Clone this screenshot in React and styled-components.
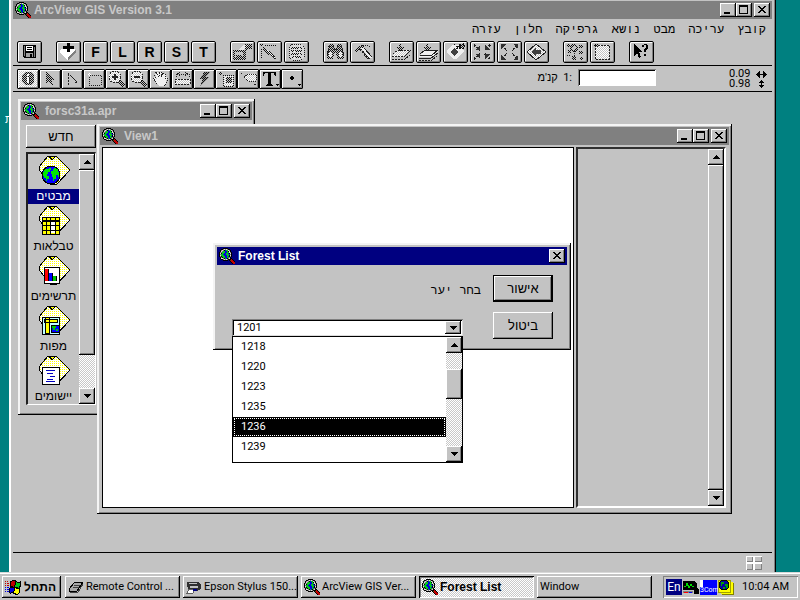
import React, { useState } from 'react';
import styled, { createGlobalStyle, css } from 'styled-components';

const GREY = '#c3c3c3';
const NAVY = '#000080';

const raised = css`
  box-shadow: inset -1px -1px #000, inset 1px 1px #fff, inset -2px -2px #808080;
`;

const checker = css`
  background: repeating-conic-gradient(#fff 0 25%, #c8c8c8 0 50%) 0 0 / 2px 2px;
`;

const GlobalStyle = createGlobalStyle`
  * { box-sizing: border-box; }
  body {
    margin: 0;
    background: #008080;
    font: 11px/14px Roboto, "Liberation Sans", Arial, sans-serif;
    color: #000;
  }
  button, input, select {
    font: inherit;
    color: inherit;
    margin: 0;
    padding: 0;
    border: 0;
    border-radius: 0;
    outline: 0;
  }
  svg { display: block; flex: none; }
`;

const Desktop = styled.div`
  position: relative;
  display: flex;
  flex-direction: column;
  height: 100vh;
  overflow: hidden;
`;

const ShortcutLabel = styled.span`
  position: absolute;
  left: 5px;
  top: 113px;
  color: #fff;
`;

const MainWindow = styled.main`
  position: relative;
  flex: 1;
  min-height: 0;
  display: flex;
  flex-direction: column;
  margin: 0 24px 0 9px;
  padding: 1px 4px 0;
  background: ${GREY};
  box-shadow: inset -1px 0 #000, inset 2px 0 #fff, inset -2px 0 #808080;
`;

const TitleBar = styled.header`
  display: flex;
  align-items: center;
  flex: none;
  gap: 3px;
  height: 18px;
  padding: 0 2px;
  background: ${p => (p.$active ? NAVY : '#808080')};
  color: ${p => (p.$active ? '#fff' : '#c8c8c8')};
`;

const Title = styled.h1`
  flex: 1;
  margin: 0;
  padding-left: ${p => p.$indent || 0}px;
  font: bold 12px/18px "Liberation Sans", Arial, sans-serif;
`;

const CaptionGroup = styled.div`
  display: flex;
`;

const CaptionButton = styled.button`
  width: 16px;
  height: 14px;
  padding: 0 0 0 1px;
  background: ${GREY};
  color: #000;
  ${raised}
  &:last-child { margin-left: 2px; }
`;

const Menu = styled.nav`
  display: flex;
  direction: rtl;
  align-items: center;
  gap: 13px;
  height: 22px;
  padding: 0 6px;
  font-family: "Liberation Mono", monospace;
  font-size: 12px;
`;

const MenuItem = styled.button`
  background: none;
`;

const ButtonBar = styled.div`
  display: flex;
  gap: 14px;
  padding: 0 4px 2px;
  border-bottom: 1px solid #000;
`;

const ButtonGroup = styled.div`
  display: flex;
  gap: 2px;
`;

const BarButton = styled.button`
  width: 25px;
  height: 22px;
  border: 1px solid #000;
  border-radius: 2px;
  background: ${GREY};
  box-shadow: inset 1px 1px #fff, inset -1px -1px #808080;
  font: bold 14px/18px "Liberation Sans", Arial, sans-serif;
`;

const ToolBar = styled.div`
  display: flex;
  align-items: flex-start;
  padding: 3px 4px 2px;
  border-bottom: 1px solid #000;
`;

const ToolButton = styled.button`
  width: 22px;
  height: 20px;
  border: 1px solid #000;
  border-radius: 1px;
  background: ${GREY};
  box-shadow: inset 1px 1px #fff, inset -1px -1px #808080;
  ${p => p.$pressed && checker}
`;

const ScaleField = styled.label`
  display: flex;
  align-items: center;
  gap: 6px;
  margin-left: auto;
`;

const ScaleInput = styled.input`
  width: 78px;
  height: 17px;
  padding: 0 3px;
  background: #fff;
  box-shadow: inset 1px 1px #808080, inset -1px -1px #fff, inset 2px 2px #000;
`;

const Readout = styled.output`
  display: flex;
  gap: 5px;
  margin-left: 73px;
`;

const ReadoutValues = styled.span`
  width: 22px;
  line-height: 10px;
`;

const Workspace = styled.div`
  position: relative;
  flex: 1;
  min-height: 0;
`;

const StatusBar = styled.footer`
  display: flex;
  justify-content: flex-end;
  flex: none;
  height: 20px;
  padding: 3px 10px 0;
  border-top: 1px solid #000;
`;

const Frame = styled.section`
  position: absolute;
  display: flex;
  flex-direction: column;
  padding: 3px;
  background: ${GREY};
  box-shadow: inset -1px -1px #000, inset 2px 2px #f4f4f4, inset -2px -2px #808080;
`;

const ProjectFrame = styled(Frame)`
  left: 5px;
  top: 7px;
  width: 237px;
  height: 316px;
`;

const ViewFrame = styled(Frame)`
  left: 84px;
  top: 32px;
  right: 40px;
  bottom: 38px;
`;

const DialogFrame = styled(Frame)`
  left: 213px;
  top: 243px;
  width: 358px;
  padding: 4px;
`;

const ProjectBody = styled.div`
  display: flex;
  flex-direction: column;
  gap: 4px;
  width: 75px;
  padding: 5px 0 0 5px;
`;

const PushButton = styled.button`
  width: 100%;
  height: ${p => p.$height}px;
  background: ${GREY};
  font-size: 13px;
  ${raised}
  ${p => p.$default && css`
    border: 1px solid #000;
  `}
`;

const DocPane = styled.div`
  display: flex;
  border: solid;
  border-width: 2px 1px 1px 2px;
  border-color: #202020 #fff #fff #202020;
`;

const DocList = styled.ul`
  flex: 1;
  min-width: 0;
  margin: 0;
  padding: 0;
  list-style: none;
`;

const DocItem = styled.li`
  display: flex;
  flex-direction: column;
  align-items: center;
  gap: 4px;
  padding-top: 1px;
`;

const DocLabel = styled.button`
  width: 100%;
  height: 15px;
  white-space: nowrap;
  font-size: 12px;
  line-height: 15px;
  background: ${p => (p.$selected ? NAVY : 'none')};
  color: ${p => (p.$selected ? '#fff' : '#000')};
`;

const ScrollTrack = styled.div`
  display: flex;
  flex-direction: column;
  flex: none;
  width: 16px;
  ${checker}
`;

const ScrollArrow = styled.button`
  display: flex;
  align-items: center;
  justify-content: center;
  flex: none;
  height: 16px;
  background: ${GREY};
  ${raised}
`;

const ScrollSpace = styled.div`
  flex: ${p => p.$grow} 0 0;
`;

const ScrollThumb = styled(ScrollSpace)`
  background: ${GREY};
  ${raised}
`;

const ViewBody = styled.div`
  display: flex;
  flex: 1;
  gap: 2px;
  padding: 2px 3px 3px 2px;
`;

const MapCanvas = styled.div`
  flex: 1;
  background: #fff;
  border: 1px solid #000;
`;

const Legend = styled.div`
  display: flex;
  justify-content: flex-end;
  width: 150px;
  border: 2px solid;
  border-color: #303030 #fff #fff #303030;
`;

const DialogBody = styled.form`
  display: flex;
  gap: 12px;
  padding: 10px 14px 7px 15px;
`;

const DialogFields = styled.div`
  display: flex;
  flex-direction: column;
  flex: 1;
  gap: 20px;
  padding-top: 8px;
`;

const FieldLabel = styled.label`
  align-self: flex-end;
  font: 12px/16px "Liberation Mono", monospace;
`;

const DialogButtons = styled.div`
  display: flex;
  flex-direction: column;
  gap: 10px;
  width: 60px;
`;

const Combo = styled.div`
  position: relative;
  display: flex;
  width: 231px;
  height: 17px;
  padding: 2px;
  background: #fff;
  box-shadow: inset 1px 1px #808080, inset -1px -1px #dcdcdc, inset 2px 2px #000;
`;

const ComboSelect = styled.select`
  flex: 1;
  appearance: none;
  padding-left: 3px;
  background: #fff;
  line-height: 13px;
`;

const ComboArrow = styled(ScrollArrow)`
  width: 16px;
  height: 13px;
`;

const DropDown = styled.div`
  position: absolute;
  left: 0;
  top: 17px;
  width: 231px;
  height: 127px;
  display: flex;
  border: 1px solid #000;
  background: #fff;
`;

const Options = styled.ul`
  flex: 1;
  margin: 0;
  padding: 0;
  list-style: none;
`;

const Option = styled.li`
  height: 20px;
  padding-left: 8px;
  line-height: 20px;
  ${p => p.$selected && css`
    background: #000;
    color: #fff;
    outline: 1px dotted #fff;
    outline-offset: -2px;
  `}
`;

const Taskbar = styled.footer`
  display: flex;
  flex: none;
  gap: 3px;
  height: 28px;
  padding: 4px 2px 2px;
  background: ${GREY};
  box-shadow: inset 0 1px #d8d8d8, inset 0 2px #fff;
`;

const TaskButton = styled.button`
  display: flex;
  align-items: center;
  gap: 2px;
  flex: 0 1 115px;
  min-width: 0;
  padding: 0 3px;
  background: ${GREY};
  white-space: nowrap;
  ${raised}
  ${p => p.$pressed && css`
    ${checker}
    font: bold 12px/14px "Liberation Sans", Arial, sans-serif;
    box-shadow: inset 1px 1px #000, inset -1px -1px #fff, inset 2px 2px #808080;
  `}
`;

const StartButton = styled(TaskButton)`
  flex: 0 0 59px;
  gap: 3px;
  margin-right: 1px;
  font-size: 12px;
  font-weight: bold;
`;

const Tray = styled.div`
  display: flex;
  align-items: center;
  gap: 1px;
  width: 135px;
  margin-left: auto;
  padding: 0 3px;
  white-space: nowrap;
  box-shadow: inset 1px 1px #808080, inset -1px -1px #fff;
`;

const Language = styled.span`
  width: 16px;
  height: 16px;
  background: ${NAVY};
  color: #fff;
  font-size: 12px;
  line-height: 16px;
  text-align: center;
`;

const Modem = styled.span`
  width: 17px;
  height: 15px;
  padding-top: 6px;
  background: linear-gradient(#fff, #fff) 0 0 / 3px 7px no-repeat #00f;
  color: #fff;
  font-size: 7px;
  line-height: 9px;
  text-align: center;
`;

const Clock = styled.time`
  margin-left: auto;
  padding-right: 6px;
`;

/* ---------- drawings ---------- */

const PALETTE = {
  k: '#000', g: '#808080', w: '#e0e0e0', b: '#0000e0', G: '#00c818',
  r: '#c00000', y: '#604000', Y: '#ffff00',
};

function Pixels({ rows }) {
  return (
    <svg width={rows[0].length} height={rows.length} shapeRendering="crispEdges" aria-hidden="true">
      {rows.flatMap((row, y) =>
        [...row].map((c, x) =>
          PALETTE[c] ? <rect key={`${x}-${y}`} x={x} y={y} width="1" height="1" fill={PALETTE[c]} /> : null
        )
      )}
    </svg>
  );
}

const GLASS = [
  '....kkkkk.......',
  '..kkgwgwgkk.....',
  '.kgwgkbGGwgk....',
  '.kwgGGbbGkwk....',
  'kggGGGbbGGwgk...',
  'kwkGGbbGGbkwk...',
  'kgGGbbbGGGbgk...',
  'kwGGGbbbGGkwk...',
  'kgkGGGbbGbkgk...',
  '.kgkGGbbGGgk....',
  '.kwwgkGbkgwkk...',
  '..kkgwgwgkkkrk..',
  '....kkkkk.kyrrk.',
  '...........krrrk',
  '............krrr',
  '.............krr',
];

const FLAG = [
  '.......kkkk.....',
  'r.r..kkrrrkk...k',
  '.....krrrrkGkkkk',
  'r.rr.krrrrkGGGGk',
  '.....krrrrkGGGGk',
  'r.rr.krrrkGGGGGk',
  '.....kkkrkGGGGkk',
  'b.bb.kkkkkkkkGk.',
  '....kbbbbkYkkkk.',
  'b.bbkbbbbkYYYYk.',
  '....kbbbbkYYYYk.',
  'b.bbkbbbkYYYYYk.',
  '....kbkkkYYYYYk.',
  '.....k..kkkYYk..',
  '..........kkk...',
];

function Patterns() {
  return (
    <svg width="0" height="0" aria-hidden="true">
      <defs>
        <pattern id="dim" width="2" height="2" patternUnits="userSpaceOnUse">
          <path d="M0 0h1v1h-1zM1 1h1v1h-1z" fill="#101010" />
        </pattern>
        <pattern id="pale" width="2" height="2" patternUnits="userSpaceOnUse">
          <path d="M0 0h1v1h-1zM1 1h1v1h-1z" fill="#fff" />
        </pattern>
        <pattern id="cloth" width="2" height="2" patternUnits="userSpaceOnUse">
          <path d="M0 0h2v2h-2z" fill="#fff" />
          <path d="M0 0h1v1h-1z" fill="#ffff00" />
        </pattern>
      </defs>
    </svg>
  );
}

function Icon({ w = 23, h = 20, children }) {
  return (
    <svg width={w} height={h} fill="none" stroke="none" shapeRendering="crispEdges" aria-hidden="true">
      {children}
    </svg>
  );
}

const dim = 'url(#dim)';
const pale = 'url(#pale)';

const barIcons = {
  save: (
    <>
      <path d="M5 3h13v13h-12l-1-1z" fill="#000" />
      <path d="M6 4h1v10h-1zM16 5h1v10h-1z" fill="#808080" />
      <path d="M8 4h7v5h-7z" fill="#fff" />
      <path d="M9 5h5v1h-5zM9 7h5v1h-5z" fill="#000" />
      <path d="M8 11h7v4h-7z" fill="#a0a0a0" />
      <path d="M12 12h2v3h-2z" fill="#000" />
    </>
  ),
  addTheme: (
    <>
      <path d="M3 8l4-2h8l4 2v3l-8 7-8-7z" fill="#fff" />
      <path d="M19 8v3l-8 7v-3z" fill="#808080" />
      <path d="M10 1h3v3h4v3h-4v3h-3v-3h-4v-3h4z" fill="#000" />
    </>
  ),
  properties: (
    <>
      <path d="M2 8h13v10h-13z" fill={dim} />
      <path d="M4 10h8v5h-8z" fill={GREY} />
      <path d="M5 13h6v3h-6z" fill={dim} />
      <path d="M7 8l5-5h5l-4 5z" fill="#e8e8e8" />
      <path d="M14 2h7v5h-4l-3 2z" fill={dim} />
    </>
  ),
  editLegend: (
    <>
      <path d="M2 2h3v2h-3zM6 3h13v1h-13zM3 6h1v10h-1z" fill={dim} />
      <path d="M5 6l12 10" stroke={dim} strokeWidth="3" />
      <path d="M9 8l8 8" stroke="#fff" />
      <path d="M12 12l6 5" stroke="#303030" strokeDasharray="2 1" />
    </>
  ),
  table: (
    <>
      <path d="M7 2h9l3 3v10l-3 3h-9l-3-3v-10z" fill="#d8d8d8" />
      <path d="M7 2h9l3 3v10l-3 3h-9l-3-3v-10z" stroke="#202020" strokeDasharray="1 1" />
      <path d="M6 5h11v2h-11zM6 8h11v2h-11zM6 11h11v2h-11zM7 14h9v2h-9z" fill={dim} />
      <path d="M9 3v14M14 3v14" stroke="#e8e8e8" strokeDasharray="2 1" />
    </>
  ),
  find: (
    <>
      <path d="M5 2h4l2 5h1l2-5h4l2 10v5h-6l-2-6h-1l-2 6h-6v-5z" fill={dim} />
      <path d="M5 10h3v5h-3zM15 10h3v5h-3z" fill={pale} />
      <path d="M6 3l-3 10M17 3l3 10M9 4l2 6M14 4l-2 6" stroke="#303030" strokeDasharray="2 1" />
    </>
  ),
  query: (
    <>
      <path d="M3 8l5-4 3-1 2 2-7 5z" fill={dim} />
      <path d="M10 3h6l4 2" stroke="#202020" strokeDasharray="1 1" />
      <path d="M9 7l9 10" stroke="#202020" strokeWidth="2" strokeDasharray="2 1" />
      <path d="M11 6l9 10" stroke="#f0f0f0" strokeWidth="2" />
      <path d="M13 6l8 9" stroke="#202020" />
    </>
  ),
  zoomAll: (
    <>
      <path d="M7 8h14l-6 7h-13z" fill={pale} />
      <path d="M3 12l5-4h13l-6 6h-13M2 17h13l6-5" stroke="#202020" strokeDasharray="2 1" />
      <path d="M9 2h2v3h3l-4 4-4-4h3z" fill={dim} />
    </>
  ),
  zoomActive: (
    <>
      <path d="M7 9h14l-6 6h-13z" fill="#f0f0f0" />
      <path d="M3 12l5-4h13l-6 5h-12M2 16h12l7-5" stroke="#202020" />
      <path d="M2 18h13l6-5" stroke="#202020" strokeDasharray="2 1" />
      <path d="M9 2h2v3h3l-4 4-4-4h3z" fill={dim} />
    </>
  ),
  zoomSelected: (
    <>
      <path d="M3 8l5-5h8l4 6-8 8h-3l-6-6z" fill="#eee" />
      <path d="M10 6l4 4-4 4-4-4z" fill="#404040" />
      <path d="M10 2l5 4M16 2v4h-4M15 6l5-5M15 2h5v4h-5z" fill={dim} stroke="#101010" strokeDasharray="2 1" />
    </>
  ),
  zoomIn: (
    <>
      <path d="M3 3l6 5M19 3l-5 5M3 17l6-5M19 17l-5-5" stroke="#202020" strokeWidth="2" strokeDasharray="2 1" />
      <path d="M9 3v5h-5zM14 3v5h5zM9 17v-5h-5zM14 17v-5h5z" fill="#303030" />
    </>
  ),
  zoomOut: (
    <>
      <path d="M4 4l5 4M19 4l-5 4M4 16l5-4M19 16l-5-4" stroke="#202020" strokeWidth="2" strokeDasharray="2 1" />
      <path d="M3 2h5l-5 5zM20 2h-5l5 5zM3 18h5l-5-5zM20 18h-5l5-5z" fill="#303030" />
    </>
  ),
  zoomPrevious: (
    <>
      <path d="M2 10l9-8 10 8-10 8z" fill={pale} stroke="#202020" />
      <path d="M6 10l5-4v2h5v4h-5v2z" fill="#404040" />
    </>
  ),
  selectFeatures: (
    <>
      <path d="M3 2h3v3h-3zM15 3h4v3h-4zM4 8h3v3h-3zM15 9h4v3h-4zM8 14h4v4h-4zM16 15h3v3h-3z" fill={dim} />
      <circle cx="10" cy="6" r="3" stroke={dim} strokeWidth="2" />
      <path d="M10 9v6M3 13h4" stroke="#202020" strokeDasharray="1 1" />
    </>
  ),
  clearSelected: (
    <>
      <path d="M4 3h14v14h-14z" fill={pale} stroke="#202020" strokeDasharray="2 1" />
      <path d="M3 2h4v3h-4z" fill={dim} />
    </>
  ),
  help: (
    <>
      <path d="M4 2v12l3-3 2 5 2-1-2-5h4z" fill="#000" />
      <path d="M12 3h2v-1h3v1h1v4h-1v1h-1v2h-2v-3h1v-1h1v-3h-2v2h-2zM14 12h2v2h-2z" fill="#000" />
    </>
  ),
};

const toolIcons = {
  identify: (
    <>
      <path d="M7 2h6l3 3v7l-3 3h-6l-3-3v-7z" fill={GREY} />
      <path d="M7 2h6l3 3v7l-3 3h-6l-3-3v-7z" fill={dim} />
      <path d="M9 4h2v2h-2zM9 7h2v6h-2z" fill="#fff" />
      <path d="M11 7h1v6h-1z" fill="#303030" />
    </>
  ),
  pointer: <path d="M6 2v11l3-2 3 5 2-1-3-5h4z" fill={dim} />,
  vertex: <path d="M6 15v-12l9 9M13 12h3" stroke="#202020" strokeDasharray="2 1" />,
  select: (
    <>
      <path d="M6 5h11v10h-12v-10" stroke="#202020" strokeDasharray="1 1" />
      <path d="M3 4h5v1h-5zM5 2h1v5h-1z" fill={pale} />
    </>
  ),
  zoomIn: (
    <>
      <circle cx="9" cy="7" r="6" fill={pale} stroke="#202020" strokeDasharray="2 1" />
      <path d="M8 4h2v2h2v2h-2v2h-2v-2h-2v-2h2z" fill="#202020" />
      <path d="M13 11l5 5" stroke={dim} strokeWidth="3" />
    </>
  ),
  zoomOut: (
    <>
      <circle cx="9" cy="7" r="6" fill={pale} stroke="#202020" strokeDasharray="2 1" />
      <path d="M6 6h6v2h-6z" fill="#202020" />
      <path d="M13 11l5 5" stroke={dim} strokeWidth="3" />
    </>
  ),
  pan: (
    <>
      <path d="M5 4l2-2 2 1 2-1 2 1 2 1 2 4-1 5-3 3h-4l-6-7 1-2 3 2z" fill="#f0f0f0" />
      <path d="M6 8l-2-4 2-2 3 5v-5h2v5l2-4 2 1v4l2 0v4l-3 4M3 8l6 8" stroke="#202020" strokeDasharray="1 1" />
    </>
  ),
  measure: (
    <>
      <path d="M3 9h15v5h-15z" fill={pale} stroke="#202020" strokeDasharray="2 1" />
      <path d="M4 7v-3h13v3M8 2l-3 2 3 2M13 2l3 2-3 2" stroke="#202020" strokeDasharray="1 1" />
    </>
  ),
  hotLink: (
    <>
      <path d="M10 2h6l-4 5h3l-9 9 3-7h-3z" fill="#909090" />
      <path d="M10 2h6l-4 5h3l-9 9 3-7h-3z" fill={dim} />
    </>
  ),
  areaOfInterest: (
    <>
      <path d="M7 5h10v11h-10z" fill={pale} stroke={dim} />
      <path d="M10 7h6v6h-6z" fill={dim} />
      <path d="M3 3h4v1h-4zM4 2h1v4h-1z" fill={dim} />
    </>
  ),
  label: (
    <>
      <path d="M6 7l4-3h8v7h-8z" fill={pale} stroke="#202020" strokeDasharray="1 1" />
      <path d="M3 3h1v1h-1zM16 14h2v1h-2z" fill="#202020" />
    </>
  ),
  text: (
    <>
      <path d="M3 2h13v4h-1l-1-3h-3v11l2 1v1h-7v-1l2-1v-11h-3l-1 3h-1z" fill="#000" />
      <path d="M16 14h3v1h-1v1h-1v-1h-1z" fill="#000" />
    </>
  ),
  point: (
    <>
      <path d="M9 6h2v1h1v2h-1v1h-2v-1h-1v-2h1z" fill="#000" />
      <path d="M16 14h3v1h-1v1h-1v-1h-1z" fill="#000" />
    </>
  ),
};

const shirt = (
  <>
    <path d="M10 1h8l13 13v2l-12 13h-7l-9-12-2-2v-3z" fill="url(#cloth)" stroke="#000" />
    <path d="M11 1l3 4 4-4z" fill="#ffff00" stroke="#000" strokeWidth="1" />
  </>
);

const docIcons = {
  views: (
    <>
      <circle cx="13" cy="20" r="9" fill="#0000ff" stroke="#000" />
      <path d="M7 14h4v-1h2v2h-1v2h-2v2h-1v2h2v3h-2v2h-1v-3h-2v-2h-1v-4h1v-2h1zM16 13h2v1h2v3h1v5h-1v-2h-2v4h-2v2h-1v-4h-1v-3h-1v-3h2v-2h1z" fill="#00e800" />
    </>
  ),
  tables: (
    <>
      <path d="M4 12h17v17h-17z" fill="#ffff00" stroke="#000" />
      <path d="M13 16h4v12h-4z" fill="#fff" />
      <path d="M4 16h17M4 20h17M4 25h17M8 12v17M12 12v17M17 12v17" stroke="#000" />
      <path d="M4 15h17v1h-17z" fill="#000" />
    </>
  ),
  charts: (
    <>
      <path d="M6 12h15v16h-15z" fill="#fff" stroke="#000" />
      <path d="M7 14h3v12h-3z" fill="#f00" />
      <path d="M11 18h3v8h-3z" fill="#00f" />
      <path d="M15 21h3v5h-3z" fill="#00c800" />
      <path d="M10 14h1v12h-1zM14 18h1v8h-1zM18 21h1v5h-1z" fill="#000" />
    </>
  ),
  layouts: (
    <>
      <path d="M4 12h17v17h-17z" fill="#c0ffff" stroke="#000" />
      <path d="M7 12h4v16h-4zM6 14h13v3h-13z" fill="#ffff00" stroke="#000" />
      <path d="M13 20h8v7h-8z" fill="#0000ff" stroke="#000" />
      <path d="M14 21h4l-1 4h-2zM18 24h2v2h-2z" fill="#00c800" />
    </>
  ),
  scripts: (
    <>
      <path d="M4 12h17v17h-17z" fill="#fff" stroke="#000" />
      <path d="M8 15h9M9 18h6M12 21h5M9 24h6M8 26h9" stroke="#0000c0" />
    </>
  ),
};

function Caption({ close }) {
  return (
    <CaptionGroup>
      {!close && (
        <CaptionButton aria-label="Minimize">
          <Icon w={15} h={14}><path d="M3 9h6v2h-6z" fill="#000" /></Icon>
        </CaptionButton>
      )}
      {!close && (
        <CaptionButton aria-label="Maximize">
          <Icon w={15} h={14}><path d="M2 2h9v9h-9zM3 4v6h7v-6z" fill="#000" fillRule="evenodd" /></Icon>
        </CaptionButton>
      )}
      <CaptionButton aria-label="Close">
        <Icon w={15} h={14}>
          <path d="M3 3h2v1h1v1h2v-1h1v-1h2v1h-1v1h-1v1h-1v1h1v1h1v1h1v1h-2v-1h-1v-1h-2v1h-1v1h-2v-1h1v-1h1v-1h1v-1h-1v-1h-1v-1h-1z" fill="#000" />
        </Icon>
      </CaptionButton>
    </CaptionGroup>
  );
}

function Arrow({ up }) {
  return (
    <Icon w={7} h={4}>
      <path d={up ? 'M3 0h1v1h1v1h1v1h1v1h-7v-1h1v-1h1v-1h1z' : 'M0 0h7v1h-1v1h-1v1h-1v1h-1v-1h-1v-1h-1v-1h-1z'} fill="#000" />
    </Icon>
  );
}

function ScrollBar({ before = 0, size, after = 0 }) {
  return (
    <ScrollTrack>
      <ScrollArrow type="button" aria-label="Scroll up"><Arrow up /></ScrollArrow>
      <ScrollSpace $grow={before} />
      <ScrollThumb $grow={size} />
      <ScrollSpace $grow={after} />
      <ScrollArrow type="button" aria-label="Scroll down"><Arrow /></ScrollArrow>
    </ScrollTrack>
  );
}

/* ---------- content ---------- */

const menus = ['קובץ', 'עריכה', 'מבט', 'נושא', 'גרפיקה', 'חלון', 'עזרה'];

const barGroups = [
  ['save'],
  ['addTheme', 'F', 'L', 'R', 'S', 'T'],
  ['properties', 'editLegend', 'table'],
  ['find', 'query'],
  ['zoomAll', 'zoomActive', 'zoomSelected', 'zoomIn', 'zoomOut', 'zoomPrevious'],
  ['selectFeatures', 'clearSelected'],
  ['help'],
];

const docs = [
  ['views', 'מבטים'],
  ['tables', 'טבלאות'],
  ['charts', 'תרשימים'],
  ['layouts', 'מפות'],
  ['scripts', 'יישומים'],
];

const forests = ['1218', '1220', '1223', '1235', '1236', '1239'];

function ForestDialog() {
  const [forest, setForest] = useState('1236');

  return (
    <DialogFrame role="dialog" aria-label="Forest List">
      <TitleBar $active>
        <Pixels rows={GLASS} />
        <Title as="h2">Forest List</Title>
        <Caption close />
      </TitleBar>
      <DialogBody onSubmit={e => e.preventDefault()}>
        <DialogFields>
          <FieldLabel htmlFor="forest" dir="rtl">בחר יער</FieldLabel>
          <Combo>
            <ComboSelect id="forest" defaultValue="1201">
              <option>1201</option>
            </ComboSelect>
            <ComboArrow type="button" aria-label="Open list"><Arrow /></ComboArrow>
            <DropDown>
              <Options role="listbox" aria-label="Forests">
                {forests.map(f => (
                  <Option
                    key={f}
                    role="option"
                    aria-selected={f === forest}
                    $selected={f === forest}
                    onClick={() => setForest(f)}
                  >
                    {f}
                  </Option>
                ))}
              </Options>
              <ScrollBar before={16} size={30} after={47} />
            </DropDown>
          </Combo>
        </DialogFields>
        <DialogButtons>
          <PushButton $height={27} $default>אישור</PushButton>
          <PushButton $height={27} type="button">ביטול</PushButton>
        </DialogButtons>
      </DialogBody>
    </DialogFrame>
  );
}

function ProjectWindow() {
  const [selected, setSelected] = useState('views');

  return (
    <ProjectFrame>
      <TitleBar>
        <Pixels rows={GLASS} />
        <Title as="h2" $indent={3}>forsc31a.apr</Title>
        <Caption />
      </TitleBar>
      <ProjectBody>
        <PushButton $height={23}>חדש</PushButton>
        <DocPane>
          <DocList>
            {docs.map(([id, name]) => (
              <DocItem key={id}>
                <Icon w={32} h={30}>
                  {shirt}
                  {docIcons[id]}
                </Icon>
                <DocLabel $selected={id === selected} onClick={() => setSelected(id)}>{name}</DocLabel>
              </DocItem>
            ))}
          </DocList>
          <ScrollBar size={185} after={33} />
        </DocPane>
      </ProjectBody>
    </ProjectFrame>
  );
}

function ViewWindow() {
  return (
    <ViewFrame>
      <TitleBar>
        <Pixels rows={GLASS} />
        <Title as="h2" $indent={3}>View1</Title>
        <Caption />
      </TitleBar>
      <ViewBody>
        <MapCanvas />
        <Legend>
          <ScrollBar size={1} />
        </Legend>
      </ViewBody>
    </ViewFrame>
  );
}

function App() {
  return (
    <Desktop>
      <GlobalStyle />
      <ShortcutLabel>ת</ShortcutLabel>
      <MainWindow>
        <TitleBar>
          <Pixels rows={GLASS} />
          <Title>ArcView GIS Version 3.1</Title>
          <Caption />
        </TitleBar>
        <Menu>
          {menus.map(m => <MenuItem key={m}>{m}</MenuItem>)}
        </Menu>
        <ButtonBar>
          {barGroups.map(group => (
            <ButtonGroup key={group[0]}>
              {group.map(b => (
                <BarButton key={b} aria-label={b}>
                  {barIcons[b] ? <Icon>{barIcons[b]}</Icon> : b}
                </BarButton>
              ))}
            </ButtonGroup>
          ))}
        </ButtonBar>
        <ToolBar>
          {Object.keys(toolIcons).map(t => (
            <ToolButton key={t} aria-label={t} $pressed={t === 'identify'}>
              <Icon w={20} h={18}>{toolIcons[t]}</Icon>
            </ToolButton>
          ))}
          <ScaleField>
            <span><bdi>קנ'מ</bdi>&nbsp; 1:</span>
            <ScaleInput type="text" />
          </ScaleField>
          <Readout>
            <ReadoutValues>0.09<br />0.98</ReadoutValues>
            <Icon w={12} h={20}>
              <path d="M0 5h1v-1h1v-1h1v-1h1v3h3v-3h1v1h1v1h1v1h1v1h-1v1h-1v1h-1v1h-1v-3h-3v3h-1v-1h-1v-1h-1v-1h-1z" fill="#000" />
              <path d="M5 11h1v1h1v1h1v1h-2v2h2v1h-1v1h-1v1h-1v-1h-1v-1h-1v-1h2v-2h-2v-1h1v-1h1z" fill="#000" />
            </Icon>
          </Readout>
        </ToolBar>
        <Workspace>
          <ProjectWindow />
          <ViewWindow />
        </Workspace>
        <StatusBar>
          <Icon w={16} h={14}>
            <path d="M0 0h16v14h-16z" fill="#fff" />
            <path d="M1 1h6v5h-6zM9 1h7v5h-7zM1 8h6v6h-6zM9 8h7v6h-7z" fill="#808080" />
            <path d="M1 1h5v4h-5zM9 1h6v4h-6zM1 8h5v5h-5zM9 8h6v5h-6z" fill={GREY} />
          </Icon>
        </StatusBar>
      </MainWindow>
      <ForestDialog />
      <Taskbar>
        <StartButton>
          <Pixels rows={FLAG} />
          התחל
        </StartButton>
        <TaskButton>
          <Icon w={16} h={16}>
            <path d="M1 10l6-7h8l-6 9h-8z" fill="#a8a8a8" stroke="#000" />
            <path d="M2 13h8l5-8M6 6h6M5 8h6" stroke="#404040" />
          </Icon>
          Remote Control ...
        </TaskButton>
        <TaskButton>
          <Icon w={16} h={16}>
            <path d="M1 3h11l3 3v4l-4 2h-7l-3-5z" fill="#303030" />
            <path d="M3 4h8v1h-8zM4 7h8v2h-8z" fill="#c0c0c0" />
            <path d="M3 10h6l-2 4h-6z" fill="#fff" stroke="#606060" />
            <path d="M7 10h4v2h-4z" fill={NAVY} />
          </Icon>
          Epson Stylus 150...
        </TaskButton>
        <TaskButton><Pixels rows={GLASS} />ArcView GIS Ver...</TaskButton>
        <TaskButton $pressed><Pixels rows={GLASS} />Forest List</TaskButton>
        <TaskButton>Window</TaskButton>
        <Tray>
          <Language>En</Language>
          <Icon w={16} h={16}>
            <path d="M0 2h12v9h-12z" fill="#000" />
            <path d="M1 7h2l1-3 2 5 2-4 1 2h2" stroke="#00e000" />
            <path d="M0 12h10v2h-10z" fill="#808080" />
            <path d="M1 13h4v1h-4z" fill="#f00" />
            <path d="M6 13h3v1h-3z" fill="#00f" />
            <path d="M12 3l2 2v4l2 2v4h-5v-3l-1-2z" fill="#000" />
          </Icon>
          <Modem>3Com</Modem>
          <Icon w={16} h={16}>
            <path d="M4 4h12v12h-12z" fill="#808000" />
            <path d="M3 3h12v12h-12z" fill="#ffff00" />
            <path d="M0 1h12v12h-12z" fill="#ffff00" stroke="#a0a000" />
            <circle cx="6" cy="6" r="5" fill="#0000a0" stroke="#000" />
            <path d="M3 3h3v2h-2v2h-1zM7 5h3v4h-2zM5 8h2v2h-2z" fill="#00a000" />
          </Icon>
          <Clock>10:04 AM</Clock>
        </Tray>
      </Taskbar>
      <Patterns />
    </Desktop>
  );
}

export default App;
